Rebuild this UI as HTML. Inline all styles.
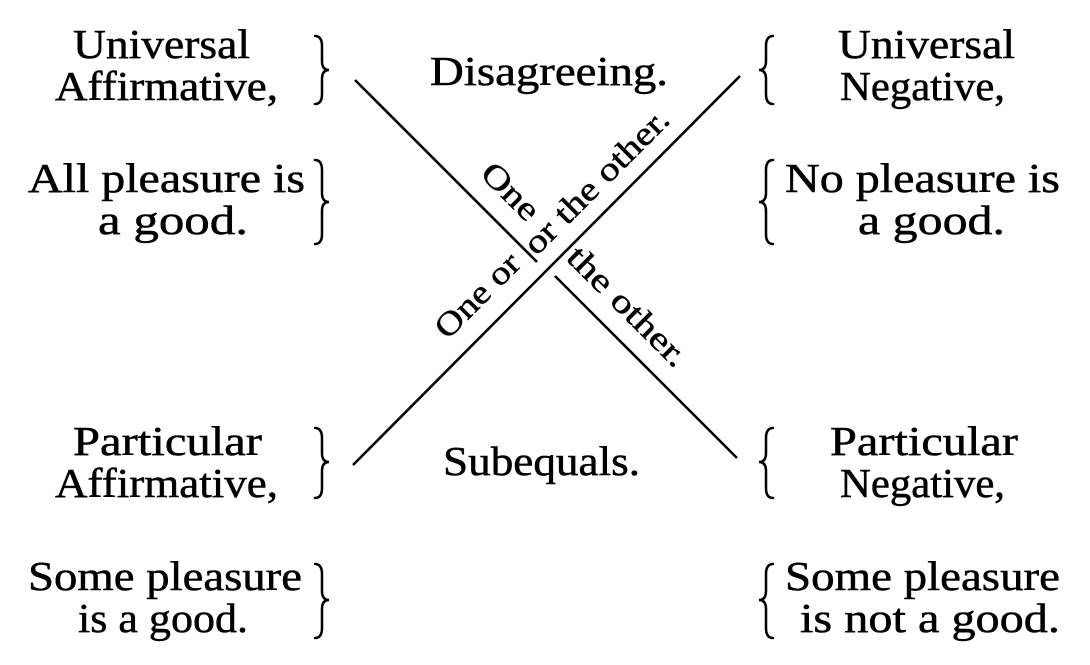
<!DOCTYPE html>
<html><head><meta charset="utf-8"><style>
html,body{margin:0;padding:0;background:#fff;}
svg{display:block;}
text{font-family:'Liberation Serif','DejaVu Serif',serif;fill:#000;stroke:#000;stroke-width:0.5;}
</style></head><body>
<svg width="1090" height="665" viewBox="0 0 1090 665" xmlns="http://www.w3.org/2000/svg">
<g font-family="Liberation Serif, DejaVu Serif, serif" font-size="41">
<text x="73" y="58" textLength="177" lengthAdjust="spacingAndGlyphs">Universal</text>
<text x="55" y="100" textLength="223" lengthAdjust="spacingAndGlyphs">Affirmative,</text>
<text x="430" y="85" textLength="238" lengthAdjust="spacingAndGlyphs">Disagreeing.</text>
<text x="838" y="58" textLength="177" lengthAdjust="spacingAndGlyphs">Universal</text>
<text x="840" y="100" textLength="165" lengthAdjust="spacingAndGlyphs">Negative,</text>
<text x="28" y="192" textLength="277" lengthAdjust="spacingAndGlyphs">All pleasure is</text>
<text x="98" y="234" textLength="150" lengthAdjust="spacingAndGlyphs">a good.</text>
<text x="785" y="192" textLength="275" lengthAdjust="spacingAndGlyphs">No pleasure is</text>
<text x="858" y="234" textLength="147" lengthAdjust="spacingAndGlyphs">a good.</text>
<text x="73" y="455" textLength="189" lengthAdjust="spacingAndGlyphs">Particular</text>
<text x="55" y="497" textLength="223" lengthAdjust="spacingAndGlyphs">Affirmative,</text>
<text x="443" y="475" textLength="197" lengthAdjust="spacingAndGlyphs">Subequals.</text>
<text x="830" y="455" textLength="188" lengthAdjust="spacingAndGlyphs">Particular</text>
<text x="840" y="497" textLength="165" lengthAdjust="spacingAndGlyphs">Negative,</text>
<text x="28" y="590" textLength="274" lengthAdjust="spacingAndGlyphs">Some pleasure</text>
<text x="78" y="632" textLength="170" lengthAdjust="spacingAndGlyphs">is a good.</text>
<text x="785" y="590" textLength="275" lengthAdjust="spacingAndGlyphs">Some pleasure</text>
<text x="800" y="632" textLength="260" lengthAdjust="spacingAndGlyphs">is not a good.</text>
</g>
<g fill="none" stroke="#000" stroke-width="2.5" stroke-linecap="round">
<path d="M315,36 Q322,36 322,46 L322,61 Q322,70 329,70 Q322,70 322,79 L322,94 Q322,104 315,104"/>
<path d="M315,160 Q322,160 322,170 L322,193 Q322,202 329,202 Q322,202 322,211 L322,234 Q322,244 315,244"/>
<path d="M315,428 Q322,428 322,438 L322,453 Q322,462 329,462 Q322,462 322,471 L322,488 Q322,498 315,498"/>
<path d="M315,564 Q322,564 322,574 L322,591 Q322,600 329,600 Q322,600 322,609 L322,628 Q322,638 315,638"/>
<path d="M773,36 Q766,36 766,46 L766,61 Q766,70 759,70 Q766,70 766,79 L766,94 Q766,104 773,104"/>
<path d="M773,160 Q766,160 766,170 L766,193 Q766,202 759,202 Q766,202 766,211 L766,234 Q766,244 773,244"/>
<path d="M773,428 Q766,428 766,438 L766,453 Q766,462 759,462 Q766,462 766,471 L766,488 Q766,498 773,498"/>
<path d="M773,564 Q766,564 766,574 L766,591 Q766,600 759,600 Q766,600 766,609 L766,628 Q766,638 773,638"/>
</g>
<g stroke="#000" stroke-width="2.6">
<line x1="355" y1="80" x2="537" y2="262"/>
<line x1="555" y1="276" x2="737" y2="458"/>
<line x1="353" y1="465" x2="740" y2="76"/>
</g>
<g font-family="Liberation Serif, DejaVu Serif, serif" font-size="33" text-anchor="middle">
<text transform="translate(503,199) rotate(45)" textLength="68" lengthAdjust="spacingAndGlyphs">One</text>
<text transform="translate(604,189) rotate(-45)" textLength="191" lengthAdjust="spacingAndGlyphs">or the other.</text>
<text transform="translate(485,303) rotate(-45)" textLength="106" lengthAdjust="spacingAndGlyphs">One or</text>
<text transform="translate(620,314) rotate(45)" textLength="156" lengthAdjust="spacingAndGlyphs">the other.</text>
</g>
</svg>
</body></html>
